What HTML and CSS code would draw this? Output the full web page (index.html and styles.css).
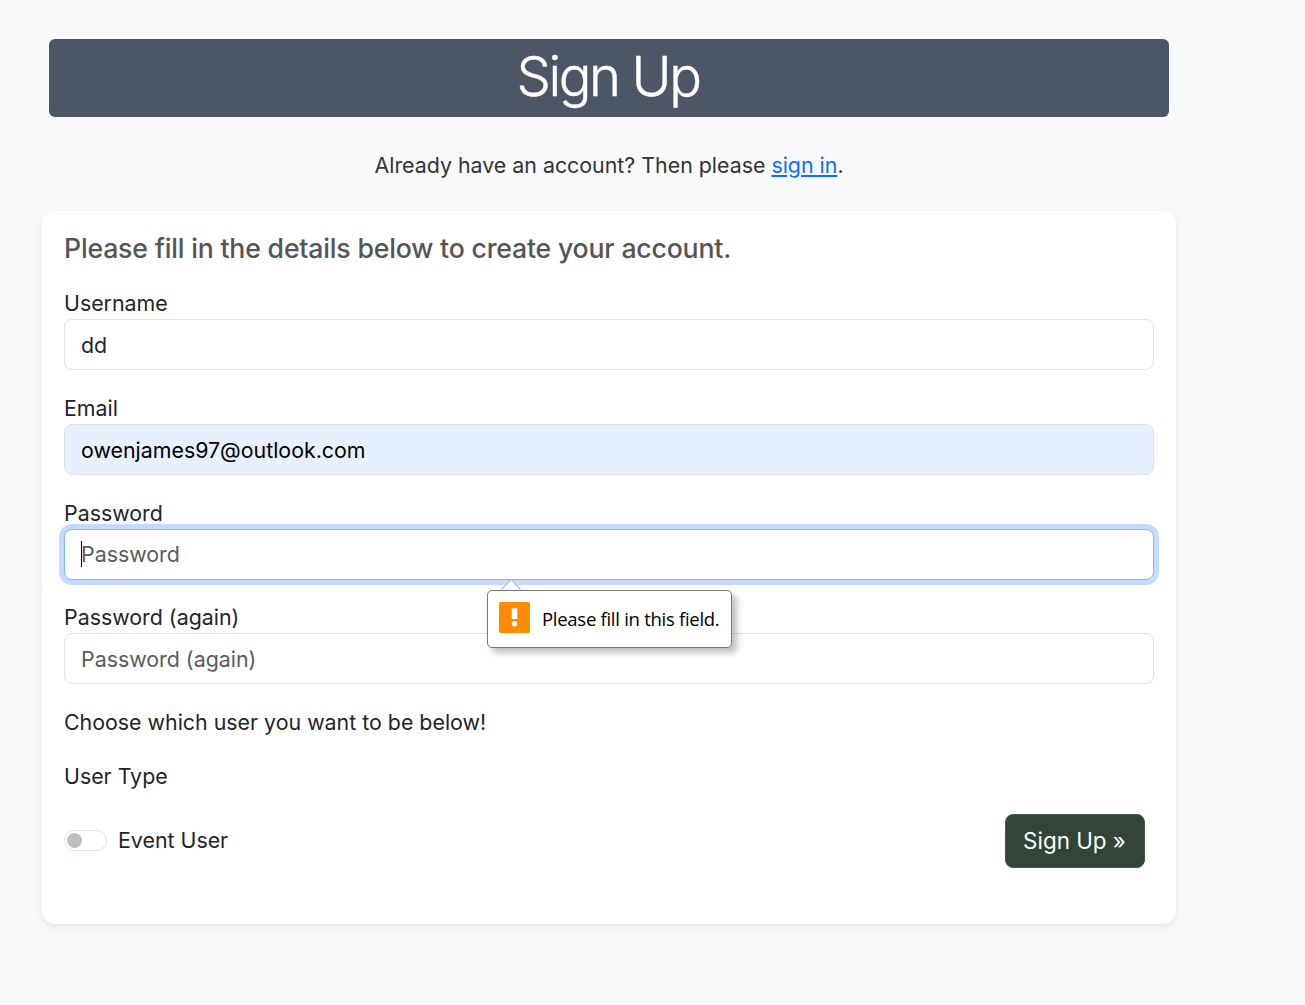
FILE: index.html
```html
<!DOCTYPE html>
<html lang="en">
<head>
<meta charset="utf-8">
<title>Sign Up</title>
<link rel="stylesheet" href="styles.css">
</head>
<body>
<main class="page">
  <h1 class="banner">Sign Up</h1>
  <p class="intro">Already have an account? Then please <a href="#">sign in</a>.</p>
  <form class="card">
    <h2 class="card-title">Please fill in the details below to create your account.</h2>
    <div class="field">
      <label for="username">Username</label>
      <input class="lowered" id="username" type="text" value="dd">
    </div>
    <div class="field">
      <label for="email">Email</label>
      <input class="autofilled lowered" id="email" type="text" value="owenjames97@outlook.com">
    </div>
    <div class="field active">
      <label for="password">Password</label>
      <input id="password" type="password" placeholder="Password">
      <span class="caret"></span>
      <div class="tooltip" role="alert">
        <svg class="tooltip-arrow" width="22" height="12" viewBox="0 0 22 12"><path d="M1.5 11.5 11 1.5l9.5 10" fill="#fff" stroke="#a3a3a3"/></svg>
        <svg class="warning" width="31" height="31" viewBox="0 0 31 31"><rect width="31" height="31" rx="2" fill="#ff8c00"/><path d="M12.7 6.2h5.6v10.8h-5.6z" fill="#fff"/><circle cx="15.5" cy="21.7" r="2.7" fill="#fff"/></svg>
        <span class="tooltip-text">Please fill in this field.</span>
      </div>
    </div>
    <div class="field">
      <label for="password2">Password (again)</label>
      <input id="password2" type="password" placeholder="Password (again)">
    </div>
    <p class="choose">Choose which user you want to be below!</p>
    <p class="type">User Type</p>
    <div class="actions">
      <label class="switch"><span class="track"><span class="thumb"></span></span><span class="switch-text">Event User</span></label>
      <button class="submit" type="button">Sign Up »</button>
    </div>
  </form>
</main>
</body>
</html>
```
FILE: styles.css
```css
* { box-sizing: border-box; }
body {
  margin: 0;
  min-height: 100vh;
  background: #f8f9fb;
  color: #212529;
  font: 400 21.36px/32px Inter, sans-serif;
}
h1, h2, p { margin: 0; }
.page { width: 1176px; padding: 39px 0 40px 42px; }
.banner {
  height: 78px;
  margin: 0 7px;
  border-radius: 6px;
  background: #4d5665;
  color: #fff;
  font-size: 54.4px;
  font-weight: 300;
  line-height: 75px;
  letter-spacing: -2.4px;
  text-indent: -2px;
  text-align: center;
  -webkit-text-stroke: .4px #fff;
}
.intro { margin-top: 32px; text-align: center; color: #333; }
.intro a { color: #0d6efd; }
.card {
  height: 712.5px;
  margin-top: 30px;
  padding: 21px 22px 22px;
  border-radius: 13px;
  background: #fff;
  box-shadow: 0 3px 6px rgba(0, 0, 0, .075);
}
.card-title {
  margin-bottom: 39px;
  color: #555;
  font-size: 26.67px;
  font-weight: 500;
  line-height: 32px;
  letter-spacing: -.19px;
}
.field { position: relative; height: 104.75px; margin-top: -16px; margin-bottom: 16px; }
.field label { display: block; height: 32px; }
.field input {
  display: block;
  width: 100%;
  height: 50.5px;
  padding: 0 16px;
  border: 1px solid #dee2e6;
  border-radius: 8px;
  background: #fff;
  color: #212529;
  font: inherit;
  outline: 0;
}
.field .lowered { padding-top: 2px; }
.field input::placeholder { color: #595c5f; opacity: 1; }
.field .autofilled { height: 51px; background: #e6f0ff; color: #000; }
.active input { height: 51px; border-color: #86b7fe; box-shadow: 0 0 0 5px #c5dafe; }
.caret { position: absolute; left: 17px; top: 44px; width: 1px; height: 26px; background: #000; }
.tooltip {
  position: absolute;
  z-index: 1;
  left: 423px;
  top: 93px;
  display: flex;
  align-items: center;
  gap: 12px;
  width: 245px;
  height: 58px;
  padding: 0 11px;
  border: 1px solid #777;
  border-radius: 5px;
  background: #fff;
  color: #000;
  box-shadow: 5px 5px 6px rgba(0, 0, 0, .25);
}
.tooltip-arrow { position: absolute; left: 12px; top: -13px; }
.warning { flex: none; margin-top: -3px; }
.tooltip-text { font: 18.5px/24px "Open Sans", sans-serif; letter-spacing: -.28px; white-space: nowrap; }
.choose { margin-top: -16px; }
.type { margin-top: 22px; }
.actions {
  display: flex;
  align-items: center;
  justify-content: space-between;
  height: 54px;
  margin: 22px 9.5px 0 0;
}
.switch { display: flex; align-items: center; gap: 11px; padding-bottom: 2px; }
.track {
  display: flex;
  align-items: center;
  width: 43px;
  height: 21px;
  padding-left: 2px;
  border: 1px solid #dee2e6;
  border-radius: 11px;
}
.thumb { width: 15px; height: 15px; border-radius: 50%; background: #bfbfbf; }
.submit {
  width: 140px;
  height: 54px;
  padding: 0;
  border: 1px solid #455b4b;
  border-radius: 8px;
  background: #334539;
  color: #fff;
  font: inherit;
  font-size: 22.4px;
}
```
